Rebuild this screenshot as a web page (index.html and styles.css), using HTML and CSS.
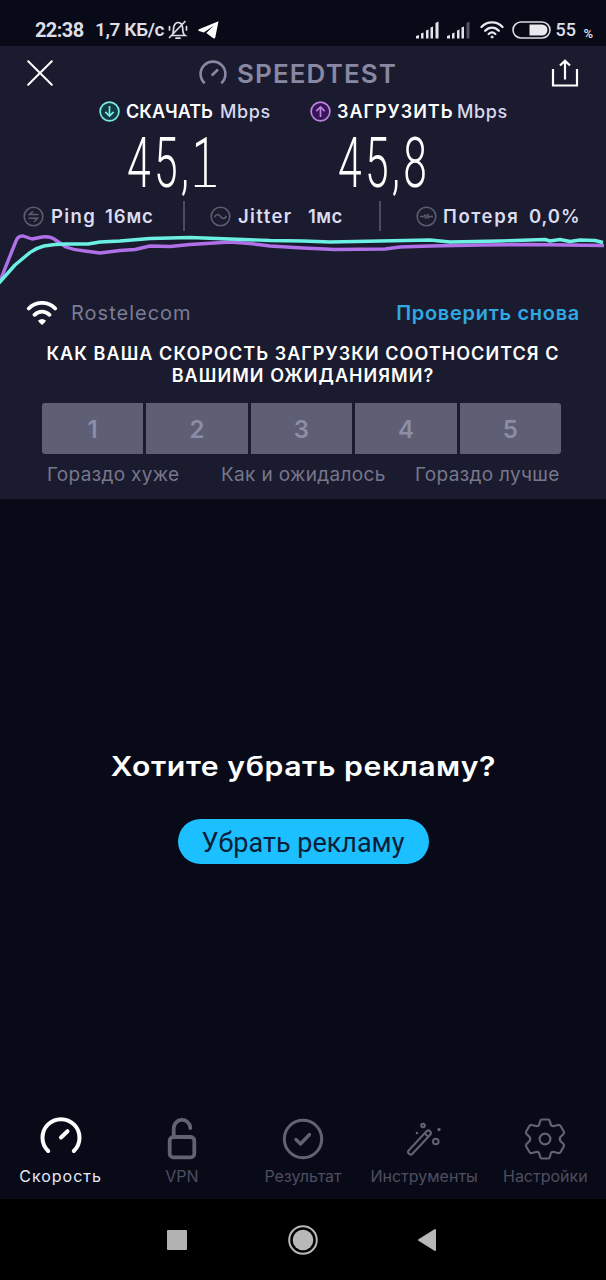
FILE: index.html
```html
<!DOCTYPE html>
<html lang="ru">
<head>
<meta charset="utf-8">
<title>Speedtest</title>
<link rel="stylesheet" href="styles.css">
</head>
<body>
<div class="phone">
  <header class="status">
    <span class="clock">22:38</span>
    <span class="rate">1,7 КБ/с</span>
    <svg class="bell" width="22" height="20" viewBox="0 0 22 20" fill="none" stroke="#dcdce4" stroke-width="1.7" stroke-linecap="round"><path d="M5 15.500C7 13.500 6 9 7 6C8 3.500 9.500 2.500 11 2.500S14.500 3.500 15.300 6C16.200 9 15 13.500 18 15.500ZM9 18.200H13M18 1.500L2.500 17.500M2.500 6.500V10M19.500 6.500V10"/></svg>
    <svg class="plane" width="21" height="18" viewBox="0 0 21 18"><path fill="#fff" d="M20.500 .3L1 8.300C0 8.800 .1 9.600 1 9.900L5.800 11.400L16 4.500L8.300 12L15 17.100C16 17.800 17 17.500 17.300 16.200Z"/></svg>
    <span class="grow"></span>
    <svg class="signal" width="25" height="18" viewBox="0 0 25 18" fill="#e4e4ea"><path d="M1 15l3-1v3.500H1zM6 12.500l2.500-1v6H6zM11 9.500l2.500-1v9H11zM15.500 6.500l2.500-1v12h-2.500zM20.500 2l3-1.500v17h-3z"/></svg>
    <svg class="signal two" width="25" height="18" viewBox="0 0 25 18" fill="#e4e4ea"><path d="M1 15l3-1v3.500H1zM6 12.500l2.500-1v6H6zM11 9.500l2.500-1v9H11zM15.500 6.500l2.500-1v12h-2.500z"/><path fill="#555562" d="M20.500 2l3-1.500v17h-3z"/></svg>
    <svg class="wifi-s" width="24" height="18" viewBox="0 0 24 18" fill="none" stroke="#e8e8ee" stroke-width="2.300" stroke-linecap="round"><path d="M1.500 6C7-.2 17-.2 22.500 6M5.200 9.700C9 5.700 15 5.700 18.800 9.700M8.700 13C10.700 11 13.300 11 15.300 13"/><circle cx="12" cy="16" r="1" fill="#e8e8ee" stroke-width="1"/></svg>
    <svg class="battery" width="39" height="18" viewBox="0 0 39 18"><rect x="1" y="1" width="37" height="16" rx="8" fill="none" stroke="#dcdce2" stroke-width="1.600"/><path fill="#e8e8ee" d="M17.500 3.500H30a5.500 5.500 0 0 1 0 11H17.500z"/></svg>
    <span class="level">55</span><span class="pct">%</span>
  </header>

  <section class="panel">
    <div class="topbar">
      <svg class="close" width="26" height="26" viewBox="0 0 26 26" stroke="#fff" stroke-width="2" stroke-linecap="round"><path d="M1.200 1.200L24.800 24.800M24.800 1.200L1.200 24.800"/></svg>
      <svg class="brand-icon" width="28" height="26" viewBox="0 0 28 26" fill="none" stroke="#8888a2" stroke-width="2.600"><path d="M5.700 23.200A12.400 12.400 0 1 1 22.300 23.200M12.700 15.500L19 9.500"/></svg>
      <h1 class="brand">SPEEDTEST</h1>
      <svg class="share" width="28" height="28" viewBox="0 0 28 28" fill="none" stroke="#fff" stroke-width="2.200"><path d="M2 10V26.500H26V10M14 20.500V2M9 6.500L14 1.700L19 6.500"/></svg>
    </div>

    <div class="labels">
      <svg width="21" height="21" viewBox="0 0 21 21" fill="none" stroke="#7ceadf" stroke-width="1.700"><circle cx="10.500" cy="10.500" r="9.400" fill="#123b45"/><path d="M10.500 5V15M6.300 10.800L10.500 15L14.700 10.800"/></svg>
      <b class="dl">СКАЧАТЬ</b><span class="unit">Mbps</span>
      <svg width="21" height="21" viewBox="0 0 21 21" fill="none" stroke="#b884dc" stroke-width="1.700"><circle cx="10.500" cy="10.500" r="9.400" fill="#3a1458"/><path d="M10.500 16V6M6.300 10.200L10.500 6L14.700 10.200"/></svg>
      <b class="ul">ЗАГРУЗИТЬ</b><span class="unit">Mbps</span>
    </div>

    <div class="speeds"><span class="speed">45,<span class="footed">1</span></span><span class="speed">45,8</span></div>

    <div class="stats">
      <svg width="21" height="21" viewBox="0 0 21 21" fill="none" stroke="#5c5c6e" stroke-width="1.600"><circle cx="10.500" cy="10.500" r="9.300"/><path d="M15.500 8.500H6.500L10 5.300M5.500 12.300H14.500L11 15.700"/></svg>
      <span class="ping">Ping</span><span class="ping-v">16мс</span>
      <i class="rule"></i>
      <svg width="21" height="21" viewBox="0 0 21 21" fill="none" stroke="#5c5c6e" stroke-width="1.600"><circle cx="10.500" cy="10.500" r="9.300"/><path d="M4.500 11C6.500 7.500 8.500 8 10.500 10.500S14.500 13.500 16.500 10"/></svg>
      <span class="jit">Jitter</span><span class="jit-v">1мс</span>
      <i class="rule"></i>
      <svg width="21" height="21" viewBox="0 0 21 21" fill="none" stroke="#5c5c6e" stroke-width="1.600"><circle cx="10.500" cy="10.500" r="9.300"/><path d="M4 10.500H8L9.500 8.500M9 12.500L12.500 8M11.500 12.500L13 10.500H17"/></svg>
      <span class="loss">Потеря</span><span class="loss-v">0,0%</span>
    </div>

    <svg class="chart" width="606" height="58" viewBox="0 232 606 58" fill="none" stroke-width="3.400" stroke-linejoin="round">
      <path stroke="#b070e8" d="M0 281L16 241Q18 235.500 23 236L32 239L42 237Q50 236 54 239L66 247Q75 250.500 85 251L100 253L120 250.500L135 249.500L150 246L170 246.500L190 244.500L230 242L250 243.500L270 246L303 248L335 249.500L385 249L400 247L430 246L480 245L530 244.500L604 245.500"/>
      <path stroke="#6cf0e4" d="M-1 283L15 265L30 252.500Q36 248 44 246Q55 244 66 244L88 244L100 242L120 241L150 238.500L190 237.500L230 239L270 240.500L303 241L330 242L380 241L430 240L450 242L500 241L545 239.500L550 241L560 239.500L570 241.500L580 240L595 240.500L603 242.500"/>
    </svg>

    <div class="provider">
      <svg width="32" height="25" viewBox="0 0 32 25" fill="none" stroke="#fff" stroke-width="3.800"><path stroke-linecap="round" d="M2.800 7.500C10 0 22 0 29.200 7.500M8.500 13.800C13 9.500 19 9.500 23.500 13.800"/><path fill="#fff" stroke="none" d="M12 19.500Q16 16.500 20 19.500Q19.500 21 16 24Q12.500 21 12 19.500Z"/></svg>
      <span class="isp">Rostelecom</span>
      <a class="again">Проверить снова</a>
    </div>

    <h2 class="question"><span class="q1">КАК ВАША СКОРОСТЬ ЗАГРУЗКИ СООТНОСИТСЯ С</span><span class="q2">ВАШИМИ ОЖИДАНИЯМИ?</span></h2>

    <div class="rating"><span>1</span><span>2</span><span>3</span><span>4</span><span>5</span></div>
    <div class="scale"><span class="s1">Гораздо хуже</span><span class="s2">Как и ожидалось</span><span class="s3">Гораздо лучше</span></div>
  </section>

  <main class="promo">
    <h3 class="ask">Хотите убрать рекламу?</h3>
    <button class="cta">Убрать рекламу</button>
  </main>

  <nav class="tabs">
    <div class="tab active">
      <svg width="44" height="44" viewBox="-22 -22 44 44" fill="none" stroke="#fff" stroke-width="4" stroke-linecap="round"><path d="M-12.800 12A18.500 18.500 0 1 1 12.800 12M0 -1.500L6.500 -7.800"/></svg>
      <span class="t1">Скорость</span>
    </div>
    <div class="tab">
      <svg width="44" height="44" viewBox="-22 -22 44 44" fill="none" stroke="#626273" stroke-width="3.800" stroke-linecap="round"><rect x="-12.300" y="-2" width="24.600" height="20.300" rx="3.500"/><path d="M-8.300 -2V-10A8.300 8.300 0 0 1 8.300 -11.500V-11"/></svg>
      <span class="t2">VPN</span>
    </div>
    <div class="tab">
      <svg width="44" height="44" viewBox="-22 -22 44 44" fill="none" stroke="#626273" stroke-width="3" stroke-linecap="round" stroke-linejoin="round"><circle r="18.700"/><path stroke-width="3.300" d="M-7 .5L-2.500 5L6.500 -4.500"/></svg>
      <span class="t3">Результат</span>
    </div>
    <div class="tab">
      <svg width="44" height="44" viewBox="-22 -22 44 44" fill="none" stroke="#626273" stroke-width="2"><rect x="-2.500" y="-15.500" width="5" height="31" rx="2.500" transform="translate(-4.500 3.500) rotate(43)"/><path d="M.8 -5.500L4 -2.500"/><circle cx="-1" cy="-13.500" r="1.800"/><circle cx="11.800" cy="2.500" r="2.800"/><g fill="#626273" stroke="none"><circle cx="-7" cy="-6" r="1.300"/><circle cx="15" cy="-9.500" r="1.700"/></g></svg>
      <span class="t4">Инструменты</span>
    </div>
    <div class="tab">
      <svg width="44" height="44" viewBox="-22 -22 44 44" fill="none" stroke="#626273" stroke-width="2.200" stroke-linejoin="round"><circle r="5.400"/><path d="M-3 -19.500H3Q4.500 -19.500 4.800 -18L5.600 -15Q6.200 -12.500 9 -13L13 -14Q14.700 -14.500 15.600 -13L18.800 -7.500Q19.600 -6 18.500 -5L15.600 -2.200Q13.800 0 15.600 2.200L18.500 5Q19.600 6 18.800 7.500L15.600 13Q14.700 14.500 13 14L9 13Q6.200 12.500 5.600 15L4.800 18Q4.500 19.500 3 19.500H-3Q-4.500 19.500 -4.800 18L-5.600 15Q-6.200 12.500 -9 13L-13 14Q-14.700 14.500 -15.600 13L-18.800 7.500Q-19.600 6 -18.500 5L-15.600 2.200Q-13.800 0 -15.600 -2.200L-18.500 -5Q-19.600 -6 -18.800 -7.500L-15.600 -13Q-14.700 -14.500 -13 -14L-9 -13Q-6.200 -12.500 -5.600 -15L-4.800 -18Q-4.500 -19.500 -3 -19.500Z"/></svg>
      <span class="t5">Настройки</span>
    </div>
  </nav>

  <footer class="sysnav">
    <svg width="20" height="20" viewBox="0 0 20 20"><rect width="20" height="20" rx="1" fill="#b2b2b2"/></svg>
    <svg width="30" height="30" viewBox="0 0 30 30"><circle cx="15" cy="15" r="13.800" fill="none" stroke="#b8b8b8" stroke-width="2"/><circle cx="15" cy="15" r="10.300" fill="#b8b8b8"/></svg>
    <svg width="20" height="24" viewBox="0 0 20 24"><path fill="#b8b8b8" stroke="#b8b8b8" stroke-width="2" stroke-linejoin="round" d="M18 2V22L2 12Z"/></svg>
  </footer>
</div>
</body>
</html>
```
FILE: styles.css
```css
* { box-sizing: border-box; }
body { margin: 0; background: #080a18; font-family: Inter, "Noto Sans", sans-serif; color: #fff; }
.phone { width: 606px; height: 1280px; display: flex; flex-direction: column; background: #080a18; white-space: nowrap; overflow: hidden; }
svg { display: block; flex: none; }
h1, h2, h3 { margin: 0; }

.status { height: 46px; padding: 13px 13px 0 35px; display: flex; align-items: center; font-family: Roboto, sans-serif; font-size: 20px; color: #dedee6; background: #080a18; }
.clock { width: 60px; font-weight: 700; letter-spacing: -0.6px; }
.rate { width: 72px; font-size: 19px; font-weight: 600; letter-spacing: -0.4px; }
.plane { margin-left: 9px; }
.grow { flex: 1; }
.two { margin-left: 6px; }
.wifi-s { margin-left: 9px; }
.battery { margin-left: 8px; }
.level { width: 28px; margin-left: 4px; font-size: 18px; font-weight: 500; }
.pct { font-size: 13px; font-weight: 600; padding-top: 8px; }

.panel { height: 453px; background: #1a1b2e; }
.topbar { height: 54px; padding: 0 27px; display: flex; align-items: center; }
.brand-icon { margin-left: 146px; }
.brand { width: 315px; margin-left: 10px; font-size: 26px; font-weight: 600; letter-spacing: 1.1px; color: #8888a2; }

.labels { height: 22px; display: grid; grid-template-columns: 27px 94px 90px 27px 120px 60px; padding-left: 99px; align-items: center; font-size: 18px; }
.labels b { font-weight: 600; }
.ul { letter-spacing: 1px; }
.unit { font-weight: 500; letter-spacing: 0.6px; color: #d8d8ee; }

.speeds { height: 78px; display: grid; grid-template-columns: 211px 211px; padding: 3px 0 0 127px; align-items: center; }
.speed { width: 150px; font-family: Roboto, sans-serif; font-weight: 280; font-size: 71px; line-height: 60px; letter-spacing: 5.500px; transform: scaleX(.6); transform-origin: left; }
/* baseline serif under the final digit */
.footed { position: relative; }
.footed::after { content: ""; position: absolute; left: 4px; bottom: 17px; width: 35px; height: 2px; background: #fff; }

.stats { height: 32px; display: grid; grid-template-columns: 28px 54px 78px 27px 28px 70px 71px 37px 27px 86px 60px; padding-left: 23px; align-items: center; font-size: 18.500px; line-height: 22px; font-weight: 600; color: #dcdcf0; }
.ping, .jit { letter-spacing: 1.400px; }
.ping-v, .loss-v { letter-spacing: 0.900px; }
.jit-v { letter-spacing: 0.500px; }
.loss { letter-spacing: 1.600px; }
.rule { width: 2px; height: 30px; background: #4c4c5e; }

.provider { height: 46px; display: flex; align-items: center; padding: 0 26px 0 26px; font-size: 20px; }
.isp { margin-left: 13px; letter-spacing: 1px; color: #7c7c94; }
.again { margin-left: auto; letter-spacing: 0.700px; color: #2fa9e4; font-weight: 600; }

.question { margin-top: 7px; display: flex; flex-direction: column; align-items: center; font-size: 18px; line-height: 22px; font-weight: 600; letter-spacing: 1.060px; }
.rating { margin: 16px 45px 0 42px; height: 51px; display: grid; grid-template-columns: repeat(5, 1fr); gap: 3px; border-radius: 3px; overflow: hidden; }
.rating span { display: flex; align-items: center; justify-content: center; padding-top: 2px; background: #5e5f74; color: #8c8da6; font-size: 24px; font-weight: 600; }
.scale { height: 24px; margin: 8px 0 0 47px; display: grid; grid-template-columns: 174px 194px 160px; align-items: center; font-size: 19px; letter-spacing: 0.330px; color: #77778c; }

.promo { height: 601px; padding-top: 249px; display: flex; flex-direction: column; align-items: center; }
.ask { font-size: 27.500px; line-height: 36px; font-weight: 600; letter-spacing: 0.500px; transform: scaleX(1.099); }
.cta { width: 251px; height: 45px; margin-top: 35px; padding: 3px 0 0; border: 0; border-radius: 23px; background: #1cbfff; color: #0b2038; font: 400 27px Roboto, sans-serif; }

.tabs { height: 99px; display: grid; grid-template-columns: repeat(5, 121.200px); padding-top: 17px; font-size: 16px; color: #4e4e60; }
.tab { display: flex; flex-direction: column; align-items: center; gap: 5px; }
.tab span { line-height: 20px; }
.active { color: #e8e8f4; }
.t1 { letter-spacing: 1px; }

.sysnav { height: 81px; background: #000; display: flex; align-items: center; padding-left: 167px; gap: 99px; }
.sysnav svg:first-child { margin-right: 2px; }
```
